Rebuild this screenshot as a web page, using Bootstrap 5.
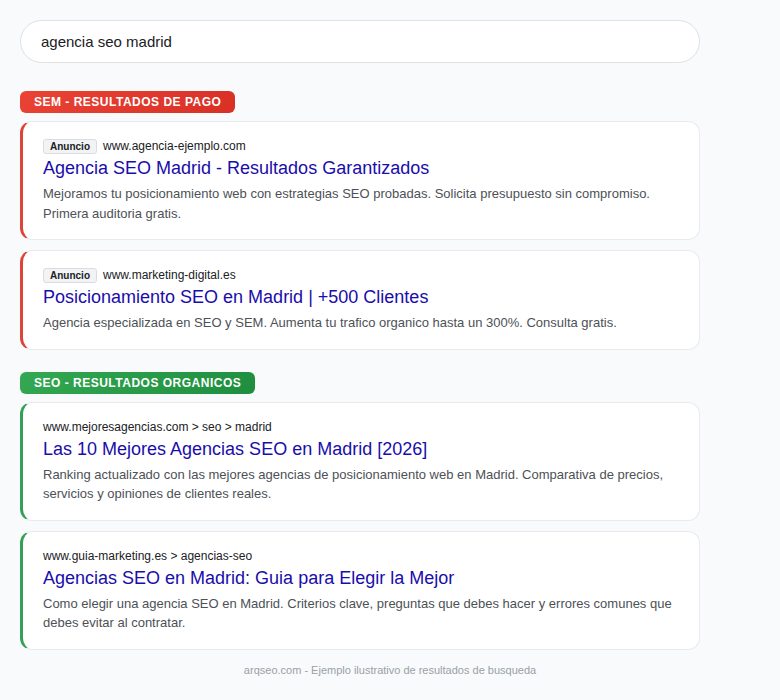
<!DOCTYPE html>
<html lang="es">
<head>
<meta charset="utf-8">
<meta name="viewport" content="width=device-width, initial-scale=1">
<title>agencia seo madrid</title>
<link href="https://cdn.jsdelivr.net/npm/bootstrap@5.3.0/dist/css/bootstrap.min.css" rel="stylesheet">
<style>
body { background: #f8fafc; color: #202124; font-family: "Liberation Sans", Arial, sans-serif; padding: 20px; }
.results { max-width: 680px; }
.query { font-size: 15px; line-height: 17px; padding: 12px 20px; border-color: #dfe1e5; color: #202124; margin-bottom: 28px; }
.tag { font-size: 12px; line-height: 14px; font-weight: 700; letter-spacing: .5px; color: #fff; padding: 4px 14px; border-radius: 6px; margin-bottom: 8px; text-transform: uppercase; }
.tag-paid { background: linear-gradient(135deg, #ea4335, #d93025); }
.tag-organic { background: linear-gradient(135deg, #34a853, #1e8e3e); }
.stack { row-gap: 10px; }
.group + .group { margin-top: 22px; }
.result { border: 1px solid #e8eaed; border-left-width: 3px; border-radius: 12px; padding: 16px 20px; }
.result-paid { border-left-color: #dc4437; }
.result-organic { border-left-color: #34a055; }
.source { font-size: 12px; line-height: 16px; gap: 6px; margin-bottom: 2px; }
.ad-label { font-size: 10px; line-height: 13px; font-weight: 700; background: #f1f3f4; border: 1px solid #dadce0; border-radius: 3px; padding: 0 6px; }
.headline { font-size: 18px; line-height: 24px; font-weight: 400; margin-bottom: 4px; }
.headline a { color: #1a0dab; }
.summary { font-size: 13px; line-height: 1.5; color: #4d5156; }
.credit { font-size: 11px; line-height: 16px; color: #9aa0a6; margin-top: 12px; }
</style>
</head>
<body>
<main class="results">
  <form role="search">
    <input class="form-control rounded-pill query" type="text" aria-label="Buscar" value="agencia seo madrid">
  </form>
  <section class="group">
    <h2 class="tag tag-paid d-table">SEM - Resultados de pago</h2>
    <div class="d-grid stack">
      <article class="card result result-paid">
        <div class="source d-flex align-items-center"><span class="ad-label">Anuncio</span><span>www.agencia-ejemplo.com</span></div>
        <h3 class="headline"><a class="text-decoration-none" href="#">Agencia SEO Madrid - Resultados Garantizados</a></h3>
        <p class="summary mb-0">Mejoramos tu posicionamiento web con estrategias SEO probadas. Solicita presupuesto sin compromiso. Primera auditoria gratis.</p>
      </article>
      <article class="card result result-paid">
        <div class="source d-flex align-items-center"><span class="ad-label">Anuncio</span><span>www.marketing-digital.es</span></div>
        <h3 class="headline"><a class="text-decoration-none" href="#">Posicionamiento SEO en Madrid | +500 Clientes</a></h3>
        <p class="summary mb-0">Agencia especializada en SEO y SEM. Aumenta tu trafico organico hasta un 300%. Consulta gratis.</p>
      </article>
    </div>
  </section>
  <section class="group">
    <h2 class="tag tag-organic d-table">SEO - Resultados organicos</h2>
    <div class="d-grid stack">
      <article class="card result result-organic">
        <div class="source">www.mejoresagencias.com &gt; seo &gt; madrid</div>
        <h3 class="headline"><a class="text-decoration-none" href="#">Las 10 Mejores Agencias SEO en Madrid [2026]</a></h3>
        <p class="summary mb-0">Ranking actualizado con las mejores agencias de posicionamiento web en Madrid. Comparativa de precios, servicios y opiniones de clientes reales.</p>
      </article>
      <article class="card result result-organic">
        <div class="source">www.guia-marketing.es &gt; agencias-seo</div>
        <h3 class="headline"><a class="text-decoration-none" href="#">Agencias SEO en Madrid: Guia para Elegir la Mejor</a></h3>
        <p class="summary mb-0">Como elegir una agencia SEO en Madrid. Criterios clave, preguntas que debes hacer y errores comunes que debes evitar al contratar.</p>
      </article>
    </div>
  </section>
</main>
<footer class="credit text-center">arqseo.com - Ejemplo ilustrativo de resultados de busqueda</footer>
<script src="https://cdn.jsdelivr.net/npm/bootstrap@5.3.0/dist/js/bootstrap.bundle.min.js"></script>
</body>
</html>
